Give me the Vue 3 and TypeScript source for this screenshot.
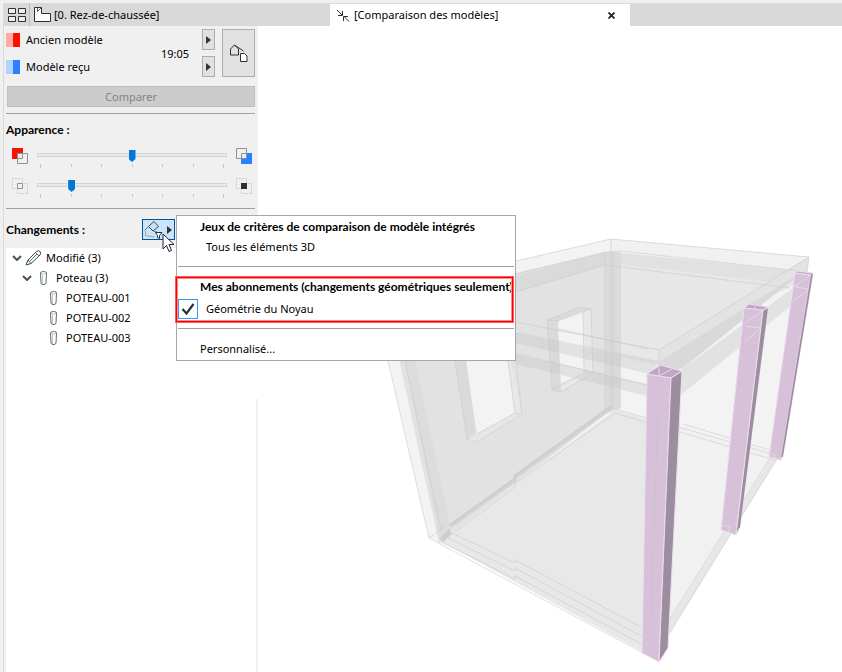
<script setup lang="ts">
import { ref } from 'vue'

interface Node {
  label: string
  level: number
  icon: 'pencil' | 'column'
  open: boolean
}

const oldness = ref(3)
const unchanged = ref(1)
const ticks = [0, 1, 2, 3, 4, 5, 6]

const nodes: Node[] = [
  { label: 'Modifié (3)', level: 1, icon: 'pencil', open: true },
  { label: 'Poteau (3)', level: 2, icon: 'column', open: true },
  { label: 'POTEAU-001', level: 3, icon: 'column', open: false },
  { label: 'POTEAU-002', level: 3, icon: 'column', open: false },
  { label: 'POTEAU-003', level: 3, icon: 'column', open: false },
]
</script>

<template>
  <div class="window">
    <header class="tabs">
      <button class="overview" aria-label="Vue d'ensemble des onglets">
        <svg width="18" height="14" viewBox="0 0 18 14" fill="#f0f0f0" stroke="#263238">
          <path d="M.5.5h7v5h-7zM10.500.500h7v5h-7zM.5 8.500h7v5h-7zM10.500 8.500h7v5h-7z" />
        </svg>
      </button>
      <button class="tab">
        <svg width="20" height="16" viewBox="0 0 20 16" fill="#fff" stroke="#263238">
          <path d="M1.500.500h7v6h9v8h-16z" />
          <path d="M4.500 1v3.500l3.500-3.500" fill="none" stroke-width=".8" />
        </svg>
        <span>[0. Rez-de-chaussée]</span>
      </button>
      <div class="tab active">
        <svg width="14" height="13" viewBox="0 0 14 13" fill="none" stroke="#263238">
          <path d="M1 1l5 5M6.500 2v4.500H2M13 12.500L8 7.500M7.500 12V7.500H12" />
        </svg>
        <span>[Comparaison des modèles]</span>
        <button class="close" aria-label="Fermer">
          <svg width="7" height="7" viewBox="0 0 7 7" fill="none" stroke="#222" stroke-width="1.800">
            <path d="M.5.5l6 6M6.500.500l-6 6" />
          </svg>
        </button>
      </div>
    </header>

    <div class="body">
      <aside class="panel">
        <section class="models">
          <div class="model old"><i class="swatch red"></i>Ancien modèle</div>
          <div class="model new"><i class="swatch blue"></i>Modèle reçu</div>
          <time>19:05</time>
          <button class="btn pick old-pick" aria-label="Choisir l'ancien modèle">
            <svg width="5" height="8" viewBox="0 0 5 8"><path d="M0 0l5 4-5 4z" fill="#333" /></svg>
          </button>
          <button class="btn pick new-pick" aria-label="Choisir le modèle reçu">
            <svg width="5" height="8" viewBox="0 0 5 8"><path d="M0 0l5 4-5 4z" fill="#333" /></svg>
          </button>
          <button class="btn big" aria-label="Afficher les modèles">
            <svg width="18" height="18" viewBox="0 0 18 18" fill="none" stroke="#263238">
              <path d="M.5 5L4.500 1l4 4v6h-8z" />
              <path d="M4.500 1l9 6" />
              <path d="M10.500 9.500h4l2.500 2.500v5.500h-6.500z" fill="#fff" />
            </svg>
          </button>
        </section>
        <button class="compare" disabled>Comparer</button>

        <hr />
        <h2>Apparence :</h2>
        <div class="slide-row">
          <svg width="16" height="16" viewBox="0 0 16 16" fill="none">
            <path d="M0 0h11v11H0z" fill="#fe1000" />
            <path d="M5.500 5.500h10v10h-10z" fill="#f0f0f0" stroke="#8c9296" />
            <path d="M5.500 5.500h5v5h-5z" stroke="#8c9296" />
          </svg>
          <div class="slider">
            <input v-model.number="oldness" type="range" min="0" max="6" aria-label="Ancien ou reçu" />
            <div class="ticks"><i v-for="t in ticks" :key="t"></i></div>
          </div>
          <svg width="16" height="16" viewBox="0 0 16 16" fill="none">
            <path d="M5 5h11v11H5z" fill="#2b80ff" />
            <path d="M.5.5h10v10H.5z" fill="#f0f0f0" stroke="#8c9296" />
            <path d="M5.500 5.500h5v5h-5z" stroke="#8c9296" />
          </svg>
        </div>
        <div class="slide-row">
          <svg width="16" height="16" viewBox="0 0 16 16" fill="none">
            <path d="M.5.5h10v10H.5zM5.500 5.500h10v10h-10z" stroke="#ccc" stroke-dasharray="2 1" />
            <path d="M5.500 5.500h5v5h-5z" fill="#f0f0f0" stroke="#8c9296" />
          </svg>
          <div class="slider">
            <input v-model.number="unchanged" type="range" min="0" max="6" aria-label="Éléments inchangés" />
            <div class="ticks"><i v-for="t in ticks" :key="t"></i></div>
          </div>
          <svg width="16" height="16" viewBox="0 0 16 16" fill="none">
            <path d="M.5.5h10v10H.5zM5.500 5.500h10v10h-10z" stroke="#ccc" stroke-dasharray="2 1" />
            <path d="M5 5h6v6H5z" fill="#263238" />
          </svg>
        </div>
        <hr class="flush" />

        <div class="changes">
          <h2>Changements :</h2>
          <div class="filter">
            <button class="filter-btn" aria-label="Filtre des changements" aria-haspopup="menu" aria-expanded="true">
              <svg width="19" height="19" viewBox="0 0 19 19" fill="none">
                <path d="M1.500 11v4.500l9 1.500" stroke="#98a5ad" />
                <path d="M4.500 6.500L10 1.500l4.500 5L9 11z" stroke="#37474f" />
                <path d="M4.500 6.500L.5 10.500M9 11l4 1" stroke="#6b7a82" />
                <path d="M11.500 12.500h6.500l-2.500 3v3l-2-1v-2z" fill="#fff" stroke="#263238" />
              </svg>
              <svg width="5" height="8" viewBox="0 0 5 8"><path d="M0 0l5 4-5 4z" fill="#333" /></svg>
            </button>

            <div class="menu" role="menu">
              <div class="group">
                <h3>Jeux de critères de comparaison de modèle intégrés</h3>
                <button class="item" role="menuitem"><span class="check"></span>Tous les éléments 3D</button>
              </div>
              <hr />
              <div class="group marked">
                <h3>Mes abonnements (changements géométriques seulement)</h3>
                <button class="item" role="menuitemcheckbox" aria-checked="true">
                  <span class="check on">
                    <svg width="14" height="12" viewBox="0 0 14 12" fill="none" stroke="#263238" stroke-width="2.200">
                      <path d="M1.500 6l4 4.500 7-9.500" />
                    </svg>
                  </span>
                  Géométrie du Noyau
                </button>
              </div>
              <hr />
              <button class="item plain" role="menuitem">Personnalisé...</button>
            </div>

            <svg class="cursor" width="14" height="20" viewBox="0 0 14 20">
              <path d="M1 1v15l3.500-3.500 2.500 6 2.500-1-2.500-6h5z" fill="#fff" stroke="#223" />
            </svg>
          </div>
        </div>

        <ul class="tree">
          <li v-for="n in nodes" :key="n.label" :class="'level-' + n.level">
            <svg v-if="n.open" class="chevron" width="10" height="6" viewBox="0 0 10 6" fill="none" stroke="#455" stroke-width="2">
              <path d="M1 1l4 4 4-4" />
            </svg>
            <svg v-if="n.icon === 'pencil'" class="icon" width="17" height="16" viewBox="0 0 17 16" fill="#fff" stroke="#37474f">
              <path d="M1 15l2-5 8.500-8.500q2-1.500 3.500 0t0 3.500L6 13.500z" />
              <path d="M3 10l3 3.500M10.500 2.500L14 6M4.500 11.500l7.500-7.500" fill="none" stroke-width=".8" />
            </svg>
            <svg v-else class="icon" width="7" height="14" viewBox="0 0 7 14" fill="#fff" stroke="#5f6b71">
              <path d="M.5 2q0-1.500 3-1.500T6.500 2L6 12q-.5 1.500-2 1.500h-1q-1.500 0-2-1.500z" />
              <path d="M1 2.500q2.500 1 5 0M2.500 3.500v9" fill="none" stroke="#a4adb1" stroke-width=".7" />
            </svg>
            <span>{{ n.label }}</span>
          </li>
        </ul>
        <div class="rest"></div>
      </aside>

      <main class="view">
        <svg class="scene" viewBox="258 26 584 646" preserveAspectRatio="xMaxYMin meet" role="img" aria-label="Modèle 3D">
          <!-- outer envelope -->
          <path d="M372 290L515 261 611 239 809 257 806 290 777 459 664 645 429 538z" fill="#f3f3f3" />
          <!-- left wall -->
          <path d="M386 300L516 273 611 251V410L439 543z" fill="#e2e2e2" />
          <path d="M405 361h10L451 530 440 540z" fill="#dcdcdc" />
          <path d="M516 276L605 252V265L516 292z" fill="#dadada" />
          <!-- slab and back wall -->
          <path d="M621 252L806 272 800 282 659 350 660 366 621 357z" fill="#e7e7e7" />
          <path d="M611 239L809 257 807 272 611 252z" fill="#f1f1f1" />
          <path d="M611 252L807 272 790 284 621 264z" fill="#e1e1e1" />
          <!-- corner post -->
          <path d="M605 252h16v156l-6 2-10 4z" fill="#dbdbdb" />
          <!-- windows -->
          <path d="M455 361h56l11 53-45 28-10-3z" fill="#e8e8e8" />
          <path d="M455 361h12l10 81-10-3z" fill="#dadada" />
          <path d="M466 361h42l7 52-38 21z" fill="#f3f3f3" />
          <path d="M467 439l48-26 7 1-46 29z" fill="#e6e6e6" />
          <path d="M547 320l33-13 11 2 2 64-32 19-9-2z" fill="#e8e8e8" />
          <path d="M547 320l11 1 3 71-9-2z" fill="#dadada" />
          <path d="M547 320l33-13 11 2-33 12z" fill="#dadada" />
          <path d="M558 321l25-10 1 62-23 10z" fill="#f3f3f3" />
          <!-- floor -->
          <path d="M440 541L615 410 777 456 664 636 643 652z" fill="#e8e8e8" />
          <path d="M680 428L770 455 777 459 668 633z" fill="#f1f1f1" />
          <path d="M771 458L777 459 669 633 669 621z" fill="#e7e7e7" />
          <!-- beams -->
          <path d="M516 332L659 361 650 374 516 343z" fill="#c8c8c8" fill-opacity=".4" />
          <path d="M516 353L647 384V396L516 364z" fill="#c8c8c8" fill-opacity=".4" />
          <path d="M809 257L659 350V365L807 270z" fill="#e3e3e3" />
          <path d="M806 269L659 362V375L683 368 795 278z" fill="#d9d9d9" />
          <path d="M793 288L682 369V394L793 304z" fill="#e2e2e2" />
          <!-- edges -->
          <g fill="none" stroke="#c9c9c9" stroke-opacity=".75" stroke-width=".8">
            <path d="M516 261L611 239 809 257 659 350 516 322M809 257l-2 15M659 350v16M611 239v171" />
            <path d="M516 274L606 252 621 251 807 272M516 292L605 265 790 288M605 252V410M613 252V408" />
            <path d="M388 361L429 538 643 653M405 361L441 530M558 329l90 20M545 361l102 24" />
            <path d="M455 361l12 78 10 3 45-28-6-53M508 361l7 52 7 1M515 413l-38 21" />
            <path d="M547 320l33-13 11 2 2 64-32 19-9-2zM547 320l11 1M558 321l33-12M583 311l1 62 9 0M584 373l-32 17" />
            <path d="M615 409l162 46M452 534L515 487v-3L615 413l160 47M454 534l61 29v-3l128 68M448 538l67 33v-3l128 69M440 541l75 38v-3l128 69M429 538L445 526" />
            <path d="M777 459L669 633M770 458L669 620M683 424l90 27" />
          </g>
          <path d="M450 526L515 480v-3L612 407" fill="none" stroke="#d2d2d2" stroke-width="4" />
          <path d="M450 525L515 478v-3L612 405" fill="none" stroke="#c8c8c8" stroke-width="1" />
          <path d="M440 538l9-9 3 5-9 8z" fill="#cccccc" />
          <!-- columns -->
          <g stroke="#efdcf1" stroke-width="1" stroke-linejoin="round">
            <path d="M795 273L811 275 781 460 769 457z" fill="#d6c1d8" />
            <path d="M811 275L813 273 783 455 781 460z" fill="#9c8e9e" />
            <path d="M795 273L797 271 813 273 811 275z" fill="#c6aecb" />
            <path d="M744 308L763 310 736 535 721 530z" fill="#d6c1d8" />
            <path d="M763 310L768 307 740 527 736 535z" fill="#9c8e9e" />
            <path d="M744 308L749 304 768 307 763 310z" fill="#c0a8c5" />
            <path d="M647 374L671 378 659 662 642 653z" fill="#d6c1d8" />
            <path d="M671 378L682 371 668 648 659 662z" fill="#9c8e9e" />
            <path d="M647 374L660 365 682 371 671 378z" fill="#c0a8c5" />
          </g>
          <g fill="none" stroke="#e3dae4" stroke-width="1">
            <path d="M659 366v10l13-7M745 326l16 2M761 328l-16 14M755 306v4M744 324l24-17M795 287l14 2-17 13M794 287l18-13M722 525l7 2v6M770 453l5 2v4" />
          </g>
          <path d="M812 274L782 457M767 309L739 528" fill="none" stroke="#9c8e9e" stroke-width="1.600" />
          <path d="M659 380L650 648" stroke="#cfbbd2" stroke-width=".7" />
        </svg>
      </main>
    </div>
  </div>
</template>

<style>
body {
  margin: 0;
  background: #fff;
}
</style>

<style scoped>
* {
  box-sizing: border-box;
}
.window {
  min-height: 100vh;
  display: flex;
  flex-direction: column;
  font: 11px/20px "Noto Sans", "Open Sans", sans-serif;
  color: #000;
}
button {
  font: inherit;
  color: inherit;
  margin: 0;
  padding: 0;
  border: 0;
  background: none;
}
svg {
  display: block;
  flex: none;
}
h2,
h3 {
  margin: 0;
  font: 700 12px/20px Lato, "Noto Sans", sans-serif;
  white-space: nowrap;
}
hr {
  margin: 0;
  border: 0;
  height: 1px;
  background: #a0a0a0;
}
.tabs {
  display: flex;
  height: 26px;
  padding-left: 1px;
  border-top: 3px solid #f0f0f0;
  border-left: 3px solid #f0f0f0;
  background: #d9d9d9;
}
.overview {
  width: 26px;
  display: flex;
  align-items: center;
  justify-content: center;
  border-right: 1px solid #bbb;
}
.tab {
  width: 300px;
  display: flex;
  align-items: center;
  gap: 1px;
  padding-left: 3px;
}
.tab.active {
  margin-top: 1px;
  gap: 4px;
  padding: 0 15px 0 6px;
  background: #fff;
}
.close {
  margin-left: auto;
}
.body {
  flex: 1;
  display: flex;
  border-left: 3px solid #f0f0f0;
}
.panel {
  width: 255px;
  flex: none;
  display: flex;
  flex-direction: column;
  padding-left: 2px;
  border-left: 1px solid #d9d9d9;
  background: #f0f0f0;
}
.panel > hr {
  margin: 6px 3px 0 0;
}
.panel > hr.flush {
  margin-top: 0;
}
.models {
  display: grid;
  grid-template: 21px 21px / 1fr auto 13px 33px;
  row-gap: 6px;
  column-gap: 7px;
  padding: 3px 3px 0 0;
}
.model {
  grid-column: 1;
  display: flex;
  align-items: center;
  gap: 6px;
}
.new {
  grid-row: 2;
}
.swatch {
  width: 14px;
  height: 14px;
}
.red {
  background: linear-gradient(to right, #ffa8a4 50%, #fe1000 50%);
}
.blue {
  background: linear-gradient(to right, #b3d3ff 50%, #2b80ff 50%);
}
time {
  grid-area: 1 / 2 / 3 / 3;
  align-self: center;
  padding: 2px 6px 0 0;
}
.btn {
  display: flex;
  align-items: center;
  justify-content: center;
  border: 1px solid #adadad;
  background: #e1e1e1;
}
.old-pick {
  grid-area: 1 / 3;
}
.new-pick {
  grid-area: 2 / 3;
}
.big {
  grid-area: 1 / 4 / 3 / 5;
}
.compare {
  height: 21px;
  margin: 9px 3px 0 1px;
  border: 1px solid #bfbfbf;
  background: #ccc;
  color: #838383;
  line-height: 19px;
}
.panel > h2 {
  margin: 6px 0 8px;
}
.slide-row {
  display: flex;
  height: 30px;
  gap: 9px;
  padding: 0 6px;
}
.slider {
  flex: 1;
  padding-top: 1px;
}
input {
  appearance: none;
  display: block;
  width: 100%;
  height: 12px;
  margin: 0;
  background: none;
}
input::-webkit-slider-runnable-track {
  height: 4px;
  border: 1px solid #d1d5d3;
  background: #e7eaea;
}
input::-webkit-slider-thumb {
  appearance: none;
  width: 7px;
  height: 12px;
  margin-top: -4px;
  background: #0078d7;
  clip-path: polygon(0 0, 100% 0, 100% 75%, 50% 100%, 0 75%);
}
.ticks {
  display: flex;
  justify-content: space-between;
  padding: 3px 3px 0;
}
.ticks i {
  width: 1px;
  height: 3px;
  background: #c4c4c4;
}
.ticks i:first-child,
.ticks i:last-child {
  height: 4px;
}
.changes {
  display: flex;
  justify-content: space-between;
  align-items: center;
  padding: 10px 83px 8px 0;
}
.filter {
  position: relative;
}
.filter-btn {
  width: 33px;
  height: 21px;
  display: flex;
  align-items: center;
  gap: 4px;
  padding-left: 1px;
  border: 1px solid #005499;
  background: #cce4f7;
}
.menu {
  position: absolute;
  z-index: 2;
  left: 34px;
  top: -4px;
  width: 340px;
  padding: 1px;
  border: 1px solid #a6a6ab;
  background: #fff;
}
.menu hr {
  margin: 9px 0 10px;
}
.group {
  position: relative;
}
.group h3 {
  padding-left: 22px;
}
.marked {
  display: grid;
  row-gap: 2px;
}
.marked::after {
  content: "";
  position: absolute;
  inset: 0 1px -3px -2px;
  border: 1px solid #f00;
  box-shadow: 0 0 0 1px #ff5a5a, inset 0 0 0 1px #ff8a8a;
  pointer-events: none;
}
.item {
  width: 100%;
  height: 20px;
  display: flex;
  align-items: center;
  gap: 8px;
  text-align: left;
}
.plain {
  padding-left: 22px;
}
.check {
  width: 20px;
  height: 20px;
  display: flex;
  align-items: center;
  justify-content: center;
}
.on {
  border: 1px solid #3399ff;
}
.cursor {
  position: absolute;
  z-index: 3;
  left: 20px;
  top: 14px;
}
.tree {
  list-style: none;
  height: 151px;
  margin: 0;
  padding: 0;
  background: #fff;
}
.tree li {
  height: 20px;
  display: flex;
  align-items: center;
}
.level-1 {
  padding-left: 6px;
}
.level-2 {
  padding-left: 16px;
}
.level-3 {
  padding-left: 44px;
}
.chevron {
  margin-right: 3px;
}
.icon {
  margin-right: 4px;
}
.level-2 .chevron {
  margin-right: 8px;
}
.level-2 .icon,
.level-3 .icon {
  margin-right: 9px;
}
.rest {
  flex: 1;
  border-right: 2px solid #f0f0f0;
  background: #fff;
}
.view {
  flex: 1;
  min-width: 0;
}
.scene {
  width: 100%;
}
</style>
